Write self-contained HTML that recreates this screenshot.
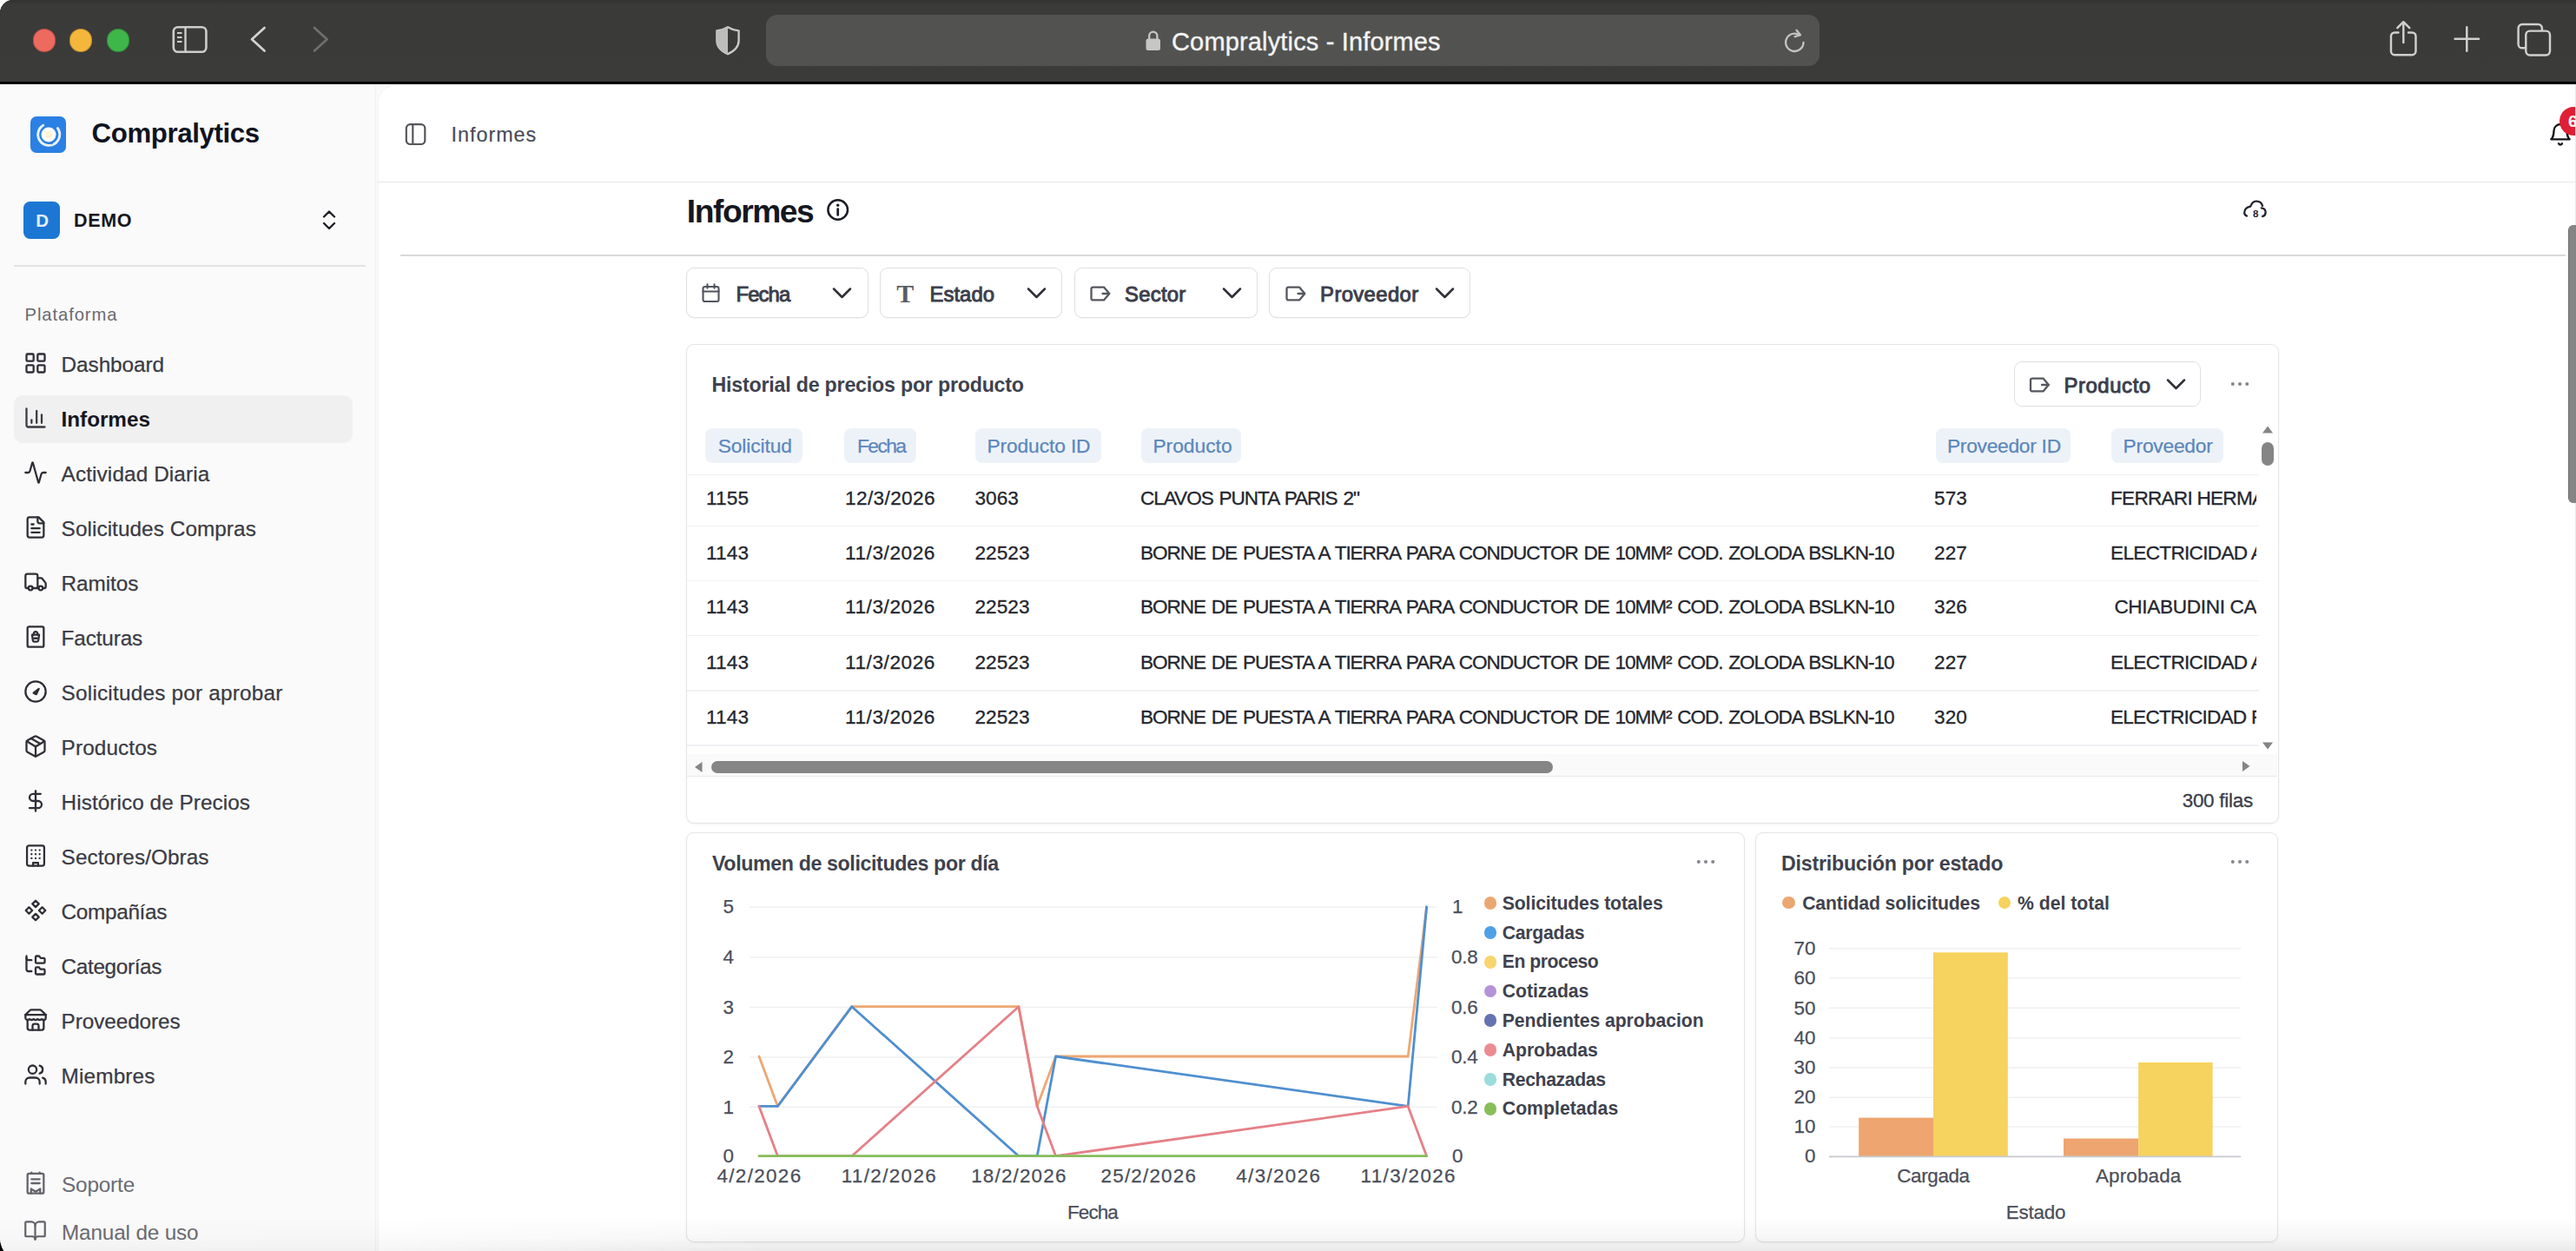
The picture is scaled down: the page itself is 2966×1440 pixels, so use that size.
<!DOCTYPE html>
<html lang="es"><head><meta charset="utf-8"><title>Compralytics - Informes</title>
<style>
html,body{margin:0;padding:0;overflow:hidden}
html{width:2966px;height:1440px}
#root{position:absolute;left:0;top:0;width:2966px;height:1440px;overflow:hidden;background:#fff}
body{width:2966px;height:1440px;position:relative;overflow:hidden;background:#fff;font-family:"Liberation Sans",sans-serif;}
.b{position:absolute;box-sizing:border-box;display:block}
.t{position:absolute;white-space:nowrap;line-height:1;font-family:"Liberation Sans",sans-serif;}
</style></head><body>
<div id="root">
<div class="b" style="left:0.00px;top:1400.00px;width:40.00px;height:40.00px;background:#000;"></div>
<div class="b" style="left:0.00px;top:0.00px;width:2990.00px;height:1452.00px;background:#fafafa;border-radius:15px 0 0 27px;"></div>
<div class="b" style="left:0.00px;top:0.00px;width:2990.00px;height:97.00px;background:#000;border-radius:15px 0 0 0;"></div>
<div class="b" style="left:0.00px;top:0.00px;width:2990.00px;height:94.00px;background:linear-gradient(#333332 0px,#3a3a39 5px,#3b3b3a 100%);border-radius:15px 0 0 0;"></div>
<div class="b" style="left:37.90px;top:33.20px;width:26.60px;height:26.60px;border-radius:50%;background:#ed6a5f;box-shadow:inset 0 0 0 1px rgba(0,0,0,.22);"></div>
<div class="b" style="left:79.80px;top:33.20px;width:26.60px;height:26.60px;border-radius:50%;background:#f5b73b;box-shadow:inset 0 0 0 1px rgba(0,0,0,.22);"></div>
<div class="b" style="left:122.50px;top:33.20px;width:26.60px;height:26.60px;border-radius:50%;background:#3fb649;box-shadow:inset 0 0 0 1px rgba(0,0,0,.22);"></div>
<svg class="b" style="left:196.00px;top:27.00px;" width="46.00" height="38.00" viewBox="0 0 46 38" fill="none"><rect x="3.8" y="4.3" width="37.6" height="28.4" rx="5" stroke="#cdcdcc" stroke-width="2.6"/><path d="M17.5 4.5v28" stroke="#cdcdcc" stroke-width="2.4"/><path d="M8 11h5.5M8 16h5.5M8 21h5.5" stroke="#cdcdcc" stroke-width="2.2"/></svg>
<svg class="b" style="left:285.00px;top:27.00px;" width="26.00" height="38.00" viewBox="0 0 26 38" fill="none"><path d="M19.5 5L5 18.3L19.5 31.6" stroke="#d4d4d3" stroke-width="2.7" stroke-linecap="round" stroke-linejoin="round"/></svg>
<svg class="b" style="left:357.00px;top:27.00px;" width="26.00" height="38.00" viewBox="0 0 26 38" fill="none"><path d="M5 5L19.5 18.3L5 31.6" stroke="#6f6f6e" stroke-width="2.7" stroke-linecap="round" stroke-linejoin="round"/></svg>
<svg class="b" style="left:822.00px;top:28.00px;" width="32.00" height="38.00" viewBox="0 0 32 38" fill="none"><path d="M16 3.2C11.5 6 7 7 3.4 7.4v11.2c0 7.8 5.6 12.6 12.6 15.6 7-3 12.600-7.800 12.600-15.600V7.400C25 7 20.500 6 16 3.200z" stroke="#c9c9c8" stroke-width="2.4" stroke-linejoin="round"/><path d="M16 3.200C11.500 6 7 7 3.400 7.400v11.200c0 7.800 5.600 12.600 12.600 15.600z" fill="#bdbdbc"/></svg>
<div class="b" style="left:882.00px;top:17.00px;width:1213.00px;height:59.00px;background:#525350;border-radius:13px;"></div>
<svg class="b" style="left:1317.00px;top:33.00px;" width="22.00" height="28.00" viewBox="0 0 22 28" fill="none"><rect x="2.500" y="11.500" width="16.500" height="13.500" rx="2.500" fill="#c6c6c5"/><path d="M6.200 12V8.300a4.600 4.600 0 0 1 9.200 0V12" stroke="#c6c6c5" stroke-width="2.300"/></svg>
<div class="t" style="left:1349.00px;top:33.85px;font-size:29.00px;color:#f4f4f4;letter-spacing:0.157px;-webkit-text-stroke:0.35px #f4f4f4;">Compralytics - Informes</div>
<svg class="b" style="left:2051.00px;top:32.00px;" width="32.00" height="32.00" viewBox="0 0 32 32" fill="none"><path d="M25.500 16.800a10.200 10.200 0 1 1-4.400-8.400" stroke="#c4c4c3" stroke-width="2.300" stroke-linecap="round"/><path d="M17.500 2.800l4.500 5.400-6.300 1.900" stroke="#c4c4c3" stroke-width="2.300" stroke-linecap="round" stroke-linejoin="round"/></svg>
<svg class="b" style="left:2747.00px;top:20.00px;" width="42.00" height="48.00" viewBox="0 0 42 48" fill="none"><path d="M14.500 17.400H10.200a4.200 4.200 0 0 0-4.200 4.200V39a4.200 4.200 0 0 0 4.200 4.200h20.100a4.200 4.200 0 0 0 4.200-4.200V21.600a4.200 4.200 0 0 0-4.200-4.200H26" stroke="#d0d0cf" stroke-width="2.450" stroke-linecap="round"/><path d="M20.300 29V5.500M13.300 12.200l7-7 7 7" stroke="#d0d0cf" stroke-width="2.450" stroke-linecap="round" stroke-linejoin="round"/></svg>
<svg class="b" style="left:2824.00px;top:29.00px;" width="32.00" height="32.00" viewBox="0 0 32 32" fill="none"><path d="M16.300 2.300v27.400M2.600 15.800h27.400" stroke="#d0d0cf" stroke-width="2.500" stroke-linecap="round"/></svg>
<svg class="b" style="left:2895.00px;top:24.00px;" width="46.00" height="44.00" viewBox="0 0 46 44" fill="none"><path d="M13.500 31.300h-4.500a4.400 4.400 0 0 1-4.400-4.400V8.400A4.400 4.400 0 0 1 9 4h18.500a4.400 4.400 0 0 1 4.400 4.400v3" stroke="#d0d0cf" stroke-width="2.450"/><rect x="13.300" y="11.600" width="27.700" height="27.800" rx="4.600" stroke="#d0d0cf" stroke-width="2.450"/></svg>
<div class="b" style="left:0.00px;top:99.00px;width:440.00px;height:1353.00px;background:#fafafa;border-radius:0 0 0 27px;"></div>
<div class="b" style="left:34.50px;top:134.00px;width:41.60px;height:42.00px;background:#2b80e3;border-radius:7px;"></div>
<svg class="b" style="left:34.50px;top:134.00px;" width="42.00" height="42.00" viewBox="0 0 42 42" fill="none"><path d="M14.750 10.200A12.500 12.500 0 1 0 31.400 13.600" stroke="#eaf3fd" stroke-width="2.900" stroke-linecap="round"/><circle cx="21" cy="21" r="8.500" fill="#fff"/><circle cx="21" cy="21" r="4.600" fill="#fdf4d6"/><circle cx="24.300" cy="30.800" r="1.500" fill="#2b80e3"/></svg>
<div class="t" style="left:105.60px;top:138.39px;font-size:31.20px;color:#10131f;font-weight:700;letter-spacing:-0.373px;">Compralytics</div>
<div class="b" style="left:27.30px;top:231.50px;width:42.20px;height:43.00px;background:#1c77d4;border-radius:7.500px;"></div>
<div class="t" style="left:41.20px;top:244.25px;font-size:20.50px;color:#e4eefa;font-weight:700;">D</div>
<div class="t" style="left:85.10px;top:243.80px;font-size:21.50px;color:#16161d;font-weight:700;letter-spacing:0.625px;">DEMO</div>
<svg class="b" style="left:366.00px;top:238.00px;" width="26.00" height="30.00" viewBox="0 0 26 30" fill="none"><path d="M7 11.500l6-6 6 6M7 19l6 6 6-6" stroke="#1c1c22" stroke-width="2.300" stroke-linecap="round" stroke-linejoin="round"/></svg>
<div class="b" style="left:15.50px;top:305.00px;width:405.50px;height:1.60px;background:#e3e3e4;"></div>
<div class="t" style="left:28.50px;top:352.20px;font-size:20.20px;color:#6a6a70;letter-spacing:0.932px;">Plataforma</div>
<svg class="b" style="left:26.80px;top:404.00px;" width="28.00" height="28.00" viewBox="0 0 24 24" fill="none"><g stroke="#2e2e36" stroke-width="1.95" stroke-linecap="round" stroke-linejoin="round"><rect width="7" height="7" x="3" y="3" rx="1"/><rect width="7" height="7" x="14" y="3" rx="1"/><rect width="7" height="7" x="14" y="14" rx="1"/><rect width="7" height="7" x="3" y="14" rx="1"/></g></svg>
<div class="t" style="left:70.60px;top:408.13px;font-size:24.30px;color:#3a3a44;letter-spacing:-0.053px;-webkit-text-stroke:0.25px #3a3a44;">Dashboard</div>
<div class="b" style="left:15.50px;top:454.50px;width:390.00px;height:55.00px;background:#f0f0f1;border-radius:10px;"></div>
<svg class="b" style="left:26.80px;top:466.97px;" width="28.00" height="28.00" viewBox="0 0 24 24" fill="none"><g stroke="#3a3a42" stroke-width="1.95" stroke-linecap="round" stroke-linejoin="round"><path d="M3 3v16a2 2 0 0 0 2 2h16"/><path d="M18 17V9"/><path d="M13 17V5"/><path d="M8 17v-3"/></g></svg>
<div class="t" style="left:70.60px;top:471.10px;font-size:24.30px;color:#16161f;font-weight:700;letter-spacing:-0.041px;">Informes</div>
<svg class="b" style="left:26.80px;top:529.94px;" width="28.00" height="28.00" viewBox="0 0 24 24" fill="none"><g stroke="#2e2e36" stroke-width="1.95" stroke-linecap="round" stroke-linejoin="round"><path d="M22 12h-2.480a2 2 0 0 0-1.930 1.460l-2.350 8.360a.25.25 0 0 1-.480 0L9.240 2.180a.25.25 0 0 0-.480 0l-2.350 8.360A2 2 0 0 1 4.490 12H2"/></g></svg>
<div class="t" style="left:70.60px;top:534.07px;font-size:24.30px;color:#3a3a44;letter-spacing:0.123px;-webkit-text-stroke:0.25px #3a3a44;">Actividad Diaria</div>
<svg class="b" style="left:26.80px;top:592.91px;" width="28.00" height="28.00" viewBox="0 0 24 24" fill="none"><g stroke="#2e2e36" stroke-width="1.95" stroke-linecap="round" stroke-linejoin="round"><path d="M15 2H6a2 2 0 0 0-2 2v16a2 2 0 0 0 2 2h12a2 2 0 0 0 2-2V7Z"/><path d="M14 2v4a2 2 0 0 0 2 2h4"/><path d="M10 9H8"/><path d="M16 13H8"/><path d="M16 17H8"/></g></svg>
<div class="t" style="left:70.60px;top:597.04px;font-size:24.30px;color:#3a3a44;letter-spacing:0.076px;-webkit-text-stroke:0.25px #3a3a44;">Solicitudes Compras</div>
<svg class="b" style="left:26.80px;top:655.88px;" width="28.00" height="28.00" viewBox="0 0 24 24" fill="none"><g stroke="#2e2e36" stroke-width="1.95" stroke-linecap="round" stroke-linejoin="round"><path d="M14 18V6a2 2 0 0 0-2-2H4a2 2 0 0 0-2 2v11a1 1 0 0 0 1 1h2"/><path d="M15 18H9"/><path d="M19 18h2a1 1 0 0 0 1-1v-3.650a1 1 0 0 0-.220-.624l-3.480-4.350A1 1 0 0 0 17.520 8H14"/><circle cx="17" cy="18" r="2"/><circle cx="7" cy="18" r="2"/></g></svg>
<div class="t" style="left:70.60px;top:660.01px;font-size:24.30px;color:#3a3a44;letter-spacing:-0.060px;-webkit-text-stroke:0.25px #3a3a44;">Ramitos</div>
<svg class="b" style="left:26.80px;top:718.85px;" width="28.00" height="28.00" viewBox="0 0 24 24" fill="none"><g stroke="#2e2e36" stroke-width="1.95" stroke-linecap="round" stroke-linejoin="round"><rect x="4" y="2" width="16" height="20" rx="1.500"/><path d="M8.500 10h7l-.8 5.500a1.500 1.500 0 0 1-1.500 1.300h-2.400a1.500 1.500 0 0 1-1.500-1.300z"/><path d="M10 10c0-1.800.8-3 2-3s2 1.200 2 3"/><path d="M10.500 13.500h3"/></g></svg>
<div class="t" style="left:70.60px;top:722.98px;font-size:24.30px;color:#3a3a44;letter-spacing:-0.129px;-webkit-text-stroke:0.25px #3a3a44;">Facturas</div>
<svg class="b" style="left:26.80px;top:781.82px;" width="28.00" height="28.00" viewBox="0 0 24 24" fill="none"><g stroke="#2e2e36" stroke-width="1.95" stroke-linecap="round" stroke-linejoin="round"><circle cx="12" cy="12" r="10"/><path d="M10 13.500l5.200-4.200-2.600 5.400z" fill="#333"/></g></svg>
<div class="t" style="left:70.60px;top:785.95px;font-size:24.30px;color:#3a3a44;letter-spacing:0.222px;-webkit-text-stroke:0.25px #3a3a44;">Solicitudes por aprobar</div>
<svg class="b" style="left:26.80px;top:844.79px;" width="28.00" height="28.00" viewBox="0 0 24 24" fill="none"><g stroke="#2e2e36" stroke-width="1.95" stroke-linecap="round" stroke-linejoin="round"><path d="M11 21.730a2 2 0 0 0 2 0l7-4A2 2 0 0 0 21 16V8a2 2 0 0 0-1-1.730l-7-4a2 2 0 0 0-2 0l-7 4A2 2 0 0 0 3 8v8a2 2 0 0 0 1 1.730z"/><path d="M12 22V12"/><path d="m3.300 7 7.703 4.734a2 2 0 0 0 1.994 0L20.700 7"/><path d="m7.500 4.270 9 5.150"/></g></svg>
<div class="t" style="left:70.60px;top:848.92px;font-size:24.30px;color:#3a3a44;letter-spacing:0.121px;-webkit-text-stroke:0.25px #3a3a44;">Productos</div>
<svg class="b" style="left:26.80px;top:907.76px;" width="28.00" height="28.00" viewBox="0 0 24 24" fill="none"><g stroke="#2e2e36" stroke-width="1.95" stroke-linecap="round" stroke-linejoin="round"><line x1="12" x2="12" y1="2" y2="22"/><path d="M17 5H9.500a3.500 3.500 0 0 0 0 7h5a3.500 3.500 0 0 1 0 7H6"/></g></svg>
<div class="t" style="left:70.60px;top:911.89px;font-size:24.30px;color:#3a3a44;letter-spacing:0.071px;-webkit-text-stroke:0.25px #3a3a44;">Histórico de Precios</div>
<svg class="b" style="left:26.80px;top:970.73px;" width="28.00" height="28.00" viewBox="0 0 24 24" fill="none"><g stroke="#2e2e36" stroke-width="1.95" stroke-linecap="round" stroke-linejoin="round"><rect width="17" height="20" x="3.500" y="2" rx="2"/><path d="M9.500 22v-3h5v3"/><path d="M8 6.500h.01M12 6.500h.01M16 6.500h.01M8 10.500h.01M12 10.500h.01M16 10.500h.01M8 14.500h.01M12 14.500h.01M16 14.500h.01"/></g></svg>
<div class="t" style="left:70.60px;top:974.86px;font-size:24.30px;color:#3a3a44;letter-spacing:0.084px;-webkit-text-stroke:0.25px #3a3a44;">Sectores/Obras</div>
<svg class="b" style="left:26.80px;top:1033.70px;" width="28.00" height="28.00" viewBox="0 0 24 24" fill="none"><g stroke="#2e2e36" stroke-width="1.95" stroke-linecap="round" stroke-linejoin="round"><path d="M12 2.300l3.200 3.200L12 8.700 8.800 5.500z"/><path d="M18.500 8.800l3.200 3.200-3.200 3.200-3.200-3.200z"/><path d="M5.500 8.800l3.200 3.200-3.200 3.200L2.300 12z"/><path d="M12 15.300l3.200 3.200-3.200 3.200-3.200-3.200z"/></g></svg>
<div class="t" style="left:70.60px;top:1037.83px;font-size:24.30px;color:#3a3a44;letter-spacing:-0.308px;-webkit-text-stroke:0.25px #3a3a44;">Compañías</div>
<svg class="b" style="left:26.80px;top:1096.67px;" width="28.00" height="28.00" viewBox="0 0 24 24" fill="none"><g stroke="#2e2e36" stroke-width="1.95" stroke-linecap="round" stroke-linejoin="round"><path d="M20 10a1 1 0 0 0 1-1V6a1 1 0 0 0-1-1h-2.500a1 1 0 0 1-.8-.4l-.9-1.200A1 1 0 0 0 15 3h-2a1 1 0 0 0-1 1v5a1 1 0 0 0 1 1Z"/><path d="M20 21a1 1 0 0 0 1-1v-3a1 1 0 0 0-1-1h-2.900a1 1 0 0 1-.880-.550l-.420-.850a1 1 0 0 0-.920-.600H13a1 1 0 0 0-1 1v5a1 1 0 0 0 1 1Z"/><path d="M3 5a2 2 0 0 0 2 2h3"/><path d="M3 3v13a2 2 0 0 0 2 2h3"/></g></svg>
<div class="t" style="left:70.60px;top:1100.80px;font-size:24.30px;color:#3a3a44;letter-spacing:-0.337px;-webkit-text-stroke:0.25px #3a3a44;">Categorías</div>
<svg class="b" style="left:26.80px;top:1159.64px;" width="28.00" height="28.00" viewBox="0 0 24 24" fill="none"><g stroke="#2e2e36" stroke-width="1.95" stroke-linecap="round" stroke-linejoin="round"><path d="m2 7 4.410-4.410A2 2 0 0 1 7.830 2h8.340a2 2 0 0 1 1.420.590L22 7"/><path d="M4 12v8a2 2 0 0 0 2 2h12a2 2 0 0 0 2-2v-8"/><path d="M15 22v-4a2 2 0 0 0-2-2h-2a2 2 0 0 0-2 2v4"/><path d="M2 7h20"/><path d="M22 7v3a2 2 0 0 1-2 2 2.700 2.700 0 0 1-1.590-.630.700.700 0 0 0-.820 0A2.700 2.700 0 0 1 16 12a2.700 2.700 0 0 1-1.590-.630.700.700 0 0 0-.820 0A2.700 2.700 0 0 1 12 12a2.700 2.700 0 0 1-1.590-.630.700.700 0 0 0-.820 0A2.700 2.700 0 0 1 8 12a2.700 2.700 0 0 1-1.590-.630.700.700 0 0 0-.820 0A2.700 2.700 0 0 1 4 12a2 2 0 0 1-2-2V7"/></g></svg>
<div class="t" style="left:70.60px;top:1163.77px;font-size:24.30px;color:#3a3a44;letter-spacing:-0.071px;-webkit-text-stroke:0.25px #3a3a44;">Proveedores</div>
<svg class="b" style="left:26.80px;top:1222.61px;" width="28.00" height="28.00" viewBox="0 0 24 24" fill="none"><g stroke="#2e2e36" stroke-width="1.95" stroke-linecap="round" stroke-linejoin="round"><path d="M16 21v-2a4 4 0 0 0-4-4H6a4 4 0 0 0-4 4v2"/><circle cx="9" cy="7" r="4"/><path d="M22 21v-2a4 4 0 0 0-3-3.870"/><path d="M16 3.130a4 4 0 0 1 0 7.750"/></g></svg>
<div class="t" style="left:70.60px;top:1226.74px;font-size:24.30px;color:#3a3a44;letter-spacing:0.166px;-webkit-text-stroke:0.25px #3a3a44;">Miembres</div>
<svg class="b" style="left:26.80px;top:1348.30px;" width="28.00" height="28.00" viewBox="0 0 24 24" fill="none"><g stroke="#62626a" stroke-width="1.95" stroke-linecap="round" stroke-linejoin="round"><rect x="4" y="2.500" width="16" height="19.500" rx="1.500"/><path d="M8 2.500v-1M16 2.500v-1"/><path d="M8 8h8M8 12h8"/><path d="M7.500 22v-4.500l4.500 2.800 4.500-2.800V22"/></g></svg>
<div class="t" style="left:71.00px;top:1351.63px;font-size:24.30px;color:#6b6b72;letter-spacing:-0.159px;">Soporte</div>
<svg class="b" style="left:27.30px;top:1403.30px;" width="27.00" height="27.00" viewBox="0 0 24 24" fill="none"><g stroke="#62626a" stroke-width="1.95" stroke-linecap="round" stroke-linejoin="round"><path d="M12 7v14"/><path d="M3 18a1 1 0 0 1-1-1V4a1 1 0 0 1 1-1h5a4 4 0 0 1 4 4 4 4 0 0 1 4-4h5a1 1 0 0 1 1 1v13a1 1 0 0 1-1 1h-6a3 3 0 0 0-3 3 3 3 0 0 0-3-3z"/></g></svg>
<div class="t" style="left:71.00px;top:1406.73px;font-size:24.30px;color:#6b6b72;letter-spacing:-0.147px;">Manual de uso</div>
<div class="b" style="left:0.00px;top:97.00px;width:2966.00px;height:2.20px;background:#fff;"></div>
<div class="b" style="left:432.30px;top:99.00px;width:1.20px;height:1345.00px;background:#f0f0f1;"></div>
<div class="b" style="left:436.30px;top:99.00px;width:2560.00px;height:1400.00px;background:#fff;border-radius:19px 0 0 0;box-shadow:0 0 3px rgba(0,0,0,.06);"></div>
<svg class="b" style="left:465.00px;top:141.00px;" width="28.00" height="28.00" viewBox="0 0 28 28" fill="none"><rect x="2.800" y="2.200" width="21.500" height="22.800" rx="4.500" stroke="#55565c" stroke-width="2.200"/><path d="M10.300 2.500v22.500" stroke="#55565c" stroke-width="2.200"/></svg>
<div class="t" style="left:519.50px;top:144.09px;font-size:23.40px;color:#4a4c58;letter-spacing:0.971px;-webkit-text-stroke:0.20px #4a4c58;">Informes</div>
<svg class="b" style="left:2934.00px;top:140.00px;" width="28.00" height="30.00" viewBox="0 0 28 30" fill="none"><g stroke="#15151c" stroke-width="2.300" stroke-linecap="round" stroke-linejoin="round"><path d="M6.500 10.500a7.500 7.500 0 0 1 15 0c0 7.500 3.200 9.800 3.200 9.800H3.300s3.200-2.300 3.200-9.800"/><path d="M12 25.200a2.200 2.200 0 0 0 4 0"/></g></svg>
<div class="b" style="left:2946.50px;top:123.00px;width:33.00px;height:33.00px;background:#df1f33;border-radius:50%;"></div>
<div class="t" style="left:2957.00px;top:130.42px;font-size:19.00px;color:#fff;font-weight:700;">6</div>
<div class="b" style="left:434.00px;top:208.50px;width:2531.00px;height:1.80px;background:#e6e6e7;"></div>
<div class="t" style="left:790.80px;top:225.41px;font-size:37.20px;color:#15171f;font-weight:700;letter-spacing:-1.451px;">Informes</div>
<svg class="b" style="left:950.00px;top:227.00px;" width="30.00" height="30.00" viewBox="0 0 30 30" fill="none"><circle cx="14.700" cy="14.500" r="11.300" stroke="#1a1c26" stroke-width="2.500"/><path d="M14.700 13.500v7" stroke="#1a1c26" stroke-width="2.700" stroke-linecap="round"/><circle cx="14.700" cy="9.200" r="1.700" fill="#1a1c26"/></svg>
<svg class="b" style="left:2580.50px;top:226.30px;" width="32.00" height="28.00" viewBox="0 0 32 28" fill="none"><g stroke="#22242c" stroke-width="2.300" stroke-linecap="round" stroke-linejoin="round"><path d="M5.900 22.600C3.900 21.800 3 20.200 3.200 18.400C3.400 15.400 5.800 12.600 10.200 11.700C11.400 8 14 5.600 17 5.600C20.400 5.600 23.200 7.800 24 10.900"/><path d="M22.800 13.300C25.800 13.600 27.700 15.800 27.600 18.600C27.500 21 26 22.600 24.100 23"/></g><text x="16.100" y="23.800" font-family="Liberation Sans" font-weight="700" font-size="11.500" text-anchor="middle" fill="#22242c">8</text></svg>
<div class="b" style="left:461.00px;top:293.30px;width:2493.00px;height:1.70px;background:#d8d9db;"></div>
<div class="b" style="left:2964.60px;top:97.00px;width:1.40px;height:1343.00px;background:#ebebec;"></div>
<div class="b" style="left:2957.30px;top:258.50px;width:12.00px;height:320.00px;background:#858585;border-radius:6px 0 0 6px;border-left:1.500px solid #707070;"></div>
<div class="b" style="left:789.50px;top:308.00px;width:210.00px;height:57.50px;border:1.500px solid #dedfe2;border-radius:9px;background:#fff;box-shadow:0 1px 1px rgba(0,0,0,.03);"></div>
<svg class="b" style="left:806.50px;top:325.20px;" width="24.00" height="25.00" viewBox="0 0 24 25" fill="none"><g stroke="#51535c" stroke-width="2.100" stroke-linecap="round" stroke-linejoin="round"><rect x="2.500" y="5" width="18" height="17" rx="2"/><path d="M2.500 10.500h18M7.500 2.200v4.500M15.500 2.200v4.500"/></g></svg>
<div class="t" style="left:847.60px;top:327.07px;font-size:23.90px;color:#3b3e4a;letter-spacing:-0.945px;-webkit-text-stroke:0.95px #3b3e4a;">Fecha</div>
<svg class="b" style="left:957.20px;top:327.50px;" width="25.00" height="19.00" viewBox="0 0 25 19" fill="none"><path d="M3 4.500l9.500 9.500L22 4.500" stroke="#2f3038" stroke-width="2.500" stroke-linecap="round" stroke-linejoin="round"/></svg>
<div class="b" style="left:1012.50px;top:308.00px;width:210.00px;height:57.50px;border:1.500px solid #dedfe2;border-radius:9px;background:#fff;box-shadow:0 1px 1px rgba(0,0,0,.03);"></div>
<div class="t" style="left:1032.30px;top:323.21px;font-size:30.00px;color:#5a5c64;font-weight:700;font-family:'Liberation Serif',serif;">T</div>
<div class="t" style="left:1070.60px;top:327.07px;font-size:23.90px;color:#3b3e4a;-webkit-text-stroke:0.95px #3b3e4a;">Estado</div>
<svg class="b" style="left:1181.00px;top:327.50px;" width="25.00" height="19.00" viewBox="0 0 25 19" fill="none"><path d="M3 4.500l9.500 9.500L22 4.500" stroke="#2f3038" stroke-width="2.500" stroke-linecap="round" stroke-linejoin="round"/></svg>
<div class="b" style="left:1236.50px;top:308.00px;width:211.00px;height:57.50px;border:1.500px solid #dedfe2;border-radius:9px;background:#fff;box-shadow:0 1px 1px rgba(0,0,0,.03);"></div>
<svg class="b" style="left:1254.00px;top:326.50px;" width="26.00" height="22.00" viewBox="0 0 26 22" fill="none"><g stroke="#55575e" stroke-width="2.300" stroke-linecap="round" stroke-linejoin="round"><path d="M2.500 5.600a2 2 0 0 1 2-2h12.500l6.300 7.400-6.300 7.400H4.500a2 2 0 0 1-2-2z"/><path d="M15.500 11h7.500"/></g></svg>
<div class="t" style="left:1295.10px;top:327.07px;font-size:23.90px;color:#3b3e4a;letter-spacing:0.221px;-webkit-text-stroke:0.95px #3b3e4a;">Sector</div>
<svg class="b" style="left:1405.50px;top:327.50px;" width="25.00" height="19.00" viewBox="0 0 25 19" fill="none"><path d="M3 4.500l9.500 9.500L22 4.500" stroke="#2f3038" stroke-width="2.500" stroke-linecap="round" stroke-linejoin="round"/></svg>
<div class="b" style="left:1461.00px;top:308.00px;width:232.00px;height:57.50px;border:1.500px solid #dedfe2;border-radius:9px;background:#fff;box-shadow:0 1px 1px rgba(0,0,0,.03);"></div>
<svg class="b" style="left:1478.50px;top:326.50px;" width="26.00" height="22.00" viewBox="0 0 26 22" fill="none"><g stroke="#55575e" stroke-width="2.300" stroke-linecap="round" stroke-linejoin="round"><path d="M2.500 5.600a2 2 0 0 1 2-2h12.500l6.300 7.400-6.300 7.400H4.500a2 2 0 0 1-2-2z"/><path d="M15.500 11h7.500"/></g></svg>
<div class="t" style="left:1520.10px;top:327.07px;font-size:23.90px;color:#3b3e4a;letter-spacing:0.348px;-webkit-text-stroke:0.95px #3b3e4a;">Proveedor</div>
<svg class="b" style="left:1651.00px;top:327.50px;" width="25.00" height="19.00" viewBox="0 0 25 19" fill="none"><path d="M3 4.500l9.500 9.500L22 4.500" stroke="#2f3038" stroke-width="2.500" stroke-linecap="round" stroke-linejoin="round"/></svg>
<div class="b" style="left:789.50px;top:395.50px;width:1834.00px;height:552.80px;border:1.700px solid #e4e5e7;border-radius:9px;background:#fff;box-shadow:0 1px 3px rgba(0,0,0,.05);"></div>
<div class="t" style="left:819.50px;top:432.26px;font-size:23.20px;color:#3e424e;font-weight:700;letter-spacing:-0.200px;">Historial de precios por producto</div>
<div class="b" style="left:2318.50px;top:415.50px;width:215.50px;height:52.50px;border:1.500px solid #dedfe2;border-radius:9px;background:#fff;"></div>
<svg class="b" style="left:2334.60px;top:431.60px;" width="27.00" height="22.00" viewBox="0 0 26 22" fill="none"><g stroke="#55575e" stroke-width="2.300" stroke-linecap="round" stroke-linejoin="round"><path d="M2.500 5.600a2 2 0 0 1 2-2h12.500l6.300 7.400-6.300 7.400H4.500a2 2 0 0 1-2-2z"/><path d="M15.500 11h7.500"/></g></svg>
<div class="t" style="left:2376.40px;top:432.07px;font-size:23.90px;color:#3b3e4a;letter-spacing:0.592px;-webkit-text-stroke:0.95px #3b3e4a;">Producto</div>
<svg class="b" style="left:2493.00px;top:433.20px;" width="25.00" height="19.00" viewBox="0 0 25 19" fill="none"><path d="M3 4.500l9.500 9.500L22 4.500" stroke="#2f3038" stroke-width="2.500" stroke-linecap="round" stroke-linejoin="round"/></svg>
<svg class="b" style="left:2565.00px;top:438.00px;" width="28.00" height="8.00" viewBox="0 0 28 8" fill="none"><circle cx="5.800" cy="4" r="2.050" fill="#86888f"/><circle cx="14" cy="4" r="2.050" fill="#86888f"/><circle cx="22.200" cy="4" r="2.050" fill="#86888f"/></svg>
<div class="b" style="left:812.40px;top:492.80px;width:111.80px;height:40.00px;background:#edf2f9;border-radius:8px;"></div>
<div class="t" style="left:826.70px;top:502.00px;font-size:22.80px;color:#5b87bb;letter-spacing:-0.120px;-webkit-text-stroke:0.25px #5b87bb;">Solicitud</div>
<div class="b" style="left:971.60px;top:492.80px;width:83.80px;height:40.00px;background:#edf2f9;border-radius:8px;"></div>
<div class="t" style="left:987.10px;top:502.00px;font-size:22.80px;color:#5b87bb;letter-spacing:-1.654px;-webkit-text-stroke:0.25px #5b87bb;">Fecha</div>
<div class="b" style="left:1122.80px;top:492.80px;width:145.20px;height:40.00px;background:#edf2f9;border-radius:8px;"></div>
<div class="t" style="left:1136.40px;top:502.00px;font-size:22.80px;color:#5b87bb;letter-spacing:-0.118px;-webkit-text-stroke:0.25px #5b87bb;">Producto ID</div>
<div class="b" style="left:1313.80px;top:492.80px;width:115.70px;height:40.00px;background:#edf2f9;border-radius:8px;"></div>
<div class="t" style="left:1327.40px;top:502.00px;font-size:22.80px;color:#5b87bb;letter-spacing:-0.007px;-webkit-text-stroke:0.25px #5b87bb;">Producto</div>
<div class="b" style="left:2228.60px;top:492.80px;width:155.90px;height:40.00px;background:#edf2f9;border-radius:8px;"></div>
<div class="t" style="left:2241.90px;top:502.00px;font-size:22.80px;color:#5b87bb;letter-spacing:-0.278px;-webkit-text-stroke:0.25px #5b87bb;">Proveedor ID</div>
<div class="b" style="left:2430.60px;top:492.80px;width:129.30px;height:40.00px;background:#edf2f9;border-radius:8px;"></div>
<div class="t" style="left:2444.60px;top:502.00px;font-size:22.80px;color:#5b87bb;letter-spacing:-0.244px;-webkit-text-stroke:0.25px #5b87bb;">Proveedor</div>
<div class="b" style="left:791.00px;top:545.80px;width:1810.00px;height:1.50px;background:#f0f1f3;"></div>
<div class="b" style="left:791.00px;top:604.60px;width:1810.00px;height:1.50px;background:#f0f1f3;"></div>
<div class="b" style="left:791.00px;top:667.50px;width:1810.00px;height:1.50px;background:#f0f1f3;"></div>
<div class="b" style="left:791.00px;top:730.80px;width:1810.00px;height:1.50px;background:#f0f1f3;"></div>
<div class="b" style="left:791.00px;top:794.00px;width:1810.00px;height:1.50px;background:#f0f1f3;"></div>
<div class="b" style="left:791.00px;top:857.00px;width:1810.00px;height:1.50px;background:#f0f1f3;"></div>
<div class="b" style="left:791px;top:540px;width:1806.5px;height:330px;overflow:hidden;">
<div class="t" style="left:22.00px;top:23.37px;font-size:22.60px;color:#23262e;letter-spacing:0.200px;-webkit-text-stroke:0.30px #23262e;">1155</div>
<div class="t" style="left:182.00px;top:23.37px;font-size:22.60px;color:#23262e;letter-spacing:0.384px;-webkit-text-stroke:0.30px #23262e;">12/3/2026</div>
<div class="t" style="left:331.40px;top:23.37px;font-size:22.60px;color:#23262e;letter-spacing:0.056px;-webkit-text-stroke:0.30px #23262e;">3063</div>
<div class="t" style="left:522.00px;top:23.37px;font-size:22.60px;color:#23262e;letter-spacing:-1.051px;word-spacing:1.60px;-webkit-text-stroke:0.30px #23262e;">CLAVOS PUNTA PARIS 2"</div>
<div class="t" style="left:1436.00px;top:23.37px;font-size:22.60px;color:#23262e;letter-spacing:0.097px;-webkit-text-stroke:0.30px #23262e;">573</div>
<div class="t" style="left:1639.00px;top:23.37px;font-size:22.60px;color:#23262e;letter-spacing:-0.747px;-webkit-text-stroke:0.30px #23262e;">FERRARI HERMANOS S.A.</div>
<div class="t" style="left:22.00px;top:86.07px;font-size:22.60px;color:#23262e;letter-spacing:0.200px;-webkit-text-stroke:0.30px #23262e;">1143</div>
<div class="t" style="left:182.00px;top:86.07px;font-size:22.60px;color:#23262e;letter-spacing:0.570px;-webkit-text-stroke:0.30px #23262e;">11/3/2026</div>
<div class="t" style="left:331.40px;top:86.07px;font-size:22.60px;color:#23262e;letter-spacing:0.091px;-webkit-text-stroke:0.30px #23262e;">22523</div>
<div class="t" style="left:522.00px;top:86.07px;font-size:22.60px;color:#23262e;letter-spacing:-1.068px;word-spacing:1.60px;-webkit-text-stroke:0.30px #23262e;">BORNE DE PUESTA A TIERRA PARA CONDUCTOR DE 10MM² COD. ZOLODA BSLKN-10</div>
<div class="t" style="left:1436.00px;top:86.07px;font-size:22.60px;color:#23262e;letter-spacing:0.097px;-webkit-text-stroke:0.30px #23262e;">227</div>
<div class="t" style="left:1639.00px;top:86.07px;font-size:22.60px;color:#23262e;letter-spacing:-0.685px;-webkit-text-stroke:0.30px #23262e;">ELECTRICIDAD ALSINA S.A.</div>
<div class="t" style="left:22.00px;top:148.27px;font-size:22.60px;color:#23262e;letter-spacing:0.200px;-webkit-text-stroke:0.30px #23262e;">1143</div>
<div class="t" style="left:182.00px;top:148.27px;font-size:22.60px;color:#23262e;letter-spacing:0.570px;-webkit-text-stroke:0.30px #23262e;">11/3/2026</div>
<div class="t" style="left:331.40px;top:148.27px;font-size:22.60px;color:#23262e;letter-spacing:0.091px;-webkit-text-stroke:0.30px #23262e;">22523</div>
<div class="t" style="left:522.00px;top:148.27px;font-size:22.60px;color:#23262e;letter-spacing:-1.068px;word-spacing:1.60px;-webkit-text-stroke:0.30px #23262e;">BORNE DE PUESTA A TIERRA PARA CONDUCTOR DE 10MM² COD. ZOLODA BSLKN-10</div>
<div class="t" style="left:1436.00px;top:148.27px;font-size:22.60px;color:#23262e;letter-spacing:0.097px;-webkit-text-stroke:0.30px #23262e;">326</div>
<div class="t" style="left:1643.40px;top:148.27px;font-size:22.60px;color:#23262e;letter-spacing:-0.338px;-webkit-text-stroke:0.30px #23262e;">CHIABUDINI CARLOS</div>
<div class="t" style="left:22.00px;top:212.07px;font-size:22.60px;color:#23262e;letter-spacing:0.200px;-webkit-text-stroke:0.30px #23262e;">1143</div>
<div class="t" style="left:182.00px;top:212.07px;font-size:22.60px;color:#23262e;letter-spacing:0.570px;-webkit-text-stroke:0.30px #23262e;">11/3/2026</div>
<div class="t" style="left:331.40px;top:212.07px;font-size:22.60px;color:#23262e;letter-spacing:0.091px;-webkit-text-stroke:0.30px #23262e;">22523</div>
<div class="t" style="left:522.00px;top:212.07px;font-size:22.60px;color:#23262e;letter-spacing:-1.068px;word-spacing:1.60px;-webkit-text-stroke:0.30px #23262e;">BORNE DE PUESTA A TIERRA PARA CONDUCTOR DE 10MM² COD. ZOLODA BSLKN-10</div>
<div class="t" style="left:1436.00px;top:212.07px;font-size:22.60px;color:#23262e;letter-spacing:0.097px;-webkit-text-stroke:0.30px #23262e;">227</div>
<div class="t" style="left:1639.00px;top:212.07px;font-size:22.60px;color:#23262e;letter-spacing:-0.685px;-webkit-text-stroke:0.30px #23262e;">ELECTRICIDAD ALSINA S.A.</div>
<div class="t" style="left:22.00px;top:275.07px;font-size:22.60px;color:#23262e;letter-spacing:0.200px;-webkit-text-stroke:0.30px #23262e;">1143</div>
<div class="t" style="left:182.00px;top:275.07px;font-size:22.60px;color:#23262e;letter-spacing:0.570px;-webkit-text-stroke:0.30px #23262e;">11/3/2026</div>
<div class="t" style="left:331.40px;top:275.07px;font-size:22.60px;color:#23262e;letter-spacing:0.091px;-webkit-text-stroke:0.30px #23262e;">22523</div>
<div class="t" style="left:522.00px;top:275.07px;font-size:22.60px;color:#23262e;letter-spacing:-1.068px;word-spacing:1.60px;-webkit-text-stroke:0.30px #23262e;">BORNE DE PUESTA A TIERRA PARA CONDUCTOR DE 10MM² COD. ZOLODA BSLKN-10</div>
<div class="t" style="left:1436.00px;top:275.07px;font-size:22.60px;color:#23262e;letter-spacing:0.097px;-webkit-text-stroke:0.30px #23262e;">320</div>
<div class="t" style="left:1639.00px;top:275.07px;font-size:22.60px;color:#23262e;letter-spacing:-0.775px;-webkit-text-stroke:0.30px #23262e;">ELECTRICIDAD FERNANDEZ</div>
</div>
<svg class="b" style="left:2603.00px;top:488.00px;" width="16.00" height="12.00" viewBox="0 0 16 12" fill="none"><path d="M8 2.500L14 10.500H2z" fill="#858585"/></svg>
<div class="b" style="left:2604.00px;top:509.00px;width:14.00px;height:27.00px;background:#858585;border-radius:7px;"></div>
<svg class="b" style="left:2603.00px;top:851.50px;" width="16.00" height="12.00" viewBox="0 0 16 12" fill="none"><path d="M8 10.500L14 2.500H2z" fill="#858585"/></svg>
<div class="b" style="left:791.00px;top:868.00px;width:1831.00px;height:25.00px;background:#fafafa;"></div>
<svg class="b" style="left:798.00px;top:875.00px;" width="12.00" height="16.00" viewBox="0 0 12 16" fill="none"><path d="M2 8L10.500 2v12z" fill="#858585"/></svg>
<div class="b" style="left:818.50px;top:875.50px;width:969.00px;height:14.00px;background:#858585;border-radius:7px;"></div>
<svg class="b" style="left:2579.50px;top:874.00px;" width="12.00" height="16.00" viewBox="0 0 12 16" fill="none"><path d="M10.500 8L2 2v12z" fill="#858585"/></svg>
<div class="b" style="left:791.00px;top:892.50px;width:1831.00px;height:1.50px;background:#e9eaec;"></div>
<div class="t" style="left:2512.70px;top:910.64px;font-size:22.40px;color:#3a3d48;letter-spacing:-0.237px;-webkit-text-stroke:0.30px #3a3d48;">300 filas</div>
<div class="b" style="left:789.50px;top:958.30px;width:1219.50px;height:472.20px;border:1.700px solid #e4e5e7;border-radius:9px;background:#fff;box-shadow:0 1px 3px rgba(0,0,0,.05);"></div>
<div class="t" style="left:820.00px;top:982.96px;font-size:23.20px;color:#3e424e;font-weight:700;letter-spacing:-0.373px;">Volumen de solicitudes por día</div>
<svg class="b" style="left:1950.00px;top:988.30px;" width="28.00" height="8.00" viewBox="0 0 28 8" fill="none"><circle cx="5.800" cy="4" r="2.050" fill="#86888f"/><circle cx="14" cy="4" r="2.050" fill="#86888f"/><circle cx="22.200" cy="4" r="2.050" fill="#86888f"/></svg>
<svg class="b" style="left:0;top:0" width="2966" height="1440" viewBox="0 0 2966 1440" fill="none"><path d="M863 1044.0H1654.500" stroke="#eeeff1" stroke-width="1.500"/><path d="M863 1102.0H1654.500" stroke="#eeeff1" stroke-width="1.500"/><path d="M863 1159.6H1654.500" stroke="#eeeff1" stroke-width="1.500"/><path d="M863 1217.0H1654.500" stroke="#eeeff1" stroke-width="1.500"/><path d="M863 1274.3H1654.500" stroke="#eeeff1" stroke-width="1.500"/><polyline points="874.0,1216.0 895.4,1273.4 980.8,1158.7 1172.9,1158.7 1194.2,1273.4 1215.6,1216.0 1621.2,1216.0 1642.6,1044.0" stroke="#eea772" stroke-width="2.800" stroke-linejoin="round" stroke-linecap="round" fill="none"/><polyline points="874.0,1273.4 895.4,1273.4 980.8,1158.7 1172.9,1330.7 1194.2,1330.7 1215.6,1216.0 1621.2,1273.4 1642.6,1044.0" stroke="#4f8fd0" stroke-width="2.800" stroke-linejoin="round" stroke-linecap="round" fill="none"/><polyline points="874.0,1273.4 895.4,1330.7 980.8,1330.7 1172.9,1158.7 1194.2,1273.4 1215.6,1330.7 1621.2,1273.4 1642.6,1330.7" stroke="#e58088" stroke-width="2.800" stroke-linejoin="round" stroke-linecap="round" fill="none"/><polyline points="874.0,1330.7 895.4,1330.7 980.8,1330.7 1172.9,1330.7 1194.2,1330.7 1215.6,1330.7 1621.2,1330.7 1642.6,1330.7" stroke="#86bd5a" stroke-width="2.800" stroke-linejoin="round" stroke-linecap="round" fill="none"/></svg>
<div class="t" style="left:832.57px;top:1033.24px;font-size:22.40px;color:#4a4e5a;-webkit-text-stroke:0.25px #4a4e5a;">5</div>
<div class="t" style="left:832.57px;top:1091.24px;font-size:22.40px;color:#4a4e5a;-webkit-text-stroke:0.25px #4a4e5a;">4</div>
<div class="t" style="left:832.57px;top:1148.84px;font-size:22.40px;color:#4a4e5a;-webkit-text-stroke:0.25px #4a4e5a;">3</div>
<div class="t" style="left:832.57px;top:1206.24px;font-size:22.40px;color:#4a4e5a;-webkit-text-stroke:0.25px #4a4e5a;">2</div>
<div class="t" style="left:832.57px;top:1263.54px;font-size:22.40px;color:#4a4e5a;-webkit-text-stroke:0.25px #4a4e5a;">1</div>
<div class="t" style="left:832.57px;top:1319.94px;font-size:22.40px;color:#4a4e5a;-webkit-text-stroke:0.25px #4a4e5a;">0</div>
<div class="t" style="left:1672.00px;top:1033.44px;font-size:22.40px;color:#4a4e5a;-webkit-text-stroke:0.25px #4a4e5a;">1</div>
<div class="t" style="left:1671.00px;top:1091.44px;font-size:22.40px;color:#4a4e5a;letter-spacing:-0.213px;-webkit-text-stroke:0.25px #4a4e5a;">0.8</div>
<div class="t" style="left:1671.00px;top:1149.04px;font-size:22.40px;color:#4a4e5a;letter-spacing:-0.213px;-webkit-text-stroke:0.25px #4a4e5a;">0.6</div>
<div class="t" style="left:1671.00px;top:1206.44px;font-size:22.40px;color:#4a4e5a;letter-spacing:-0.213px;-webkit-text-stroke:0.25px #4a4e5a;">0.4</div>
<div class="t" style="left:1671.00px;top:1263.74px;font-size:22.40px;color:#4a4e5a;letter-spacing:-0.213px;-webkit-text-stroke:0.25px #4a4e5a;">0.2</div>
<div class="t" style="left:1672.00px;top:1320.14px;font-size:22.40px;color:#4a4e5a;-webkit-text-stroke:0.25px #4a4e5a;">0</div>
<div class="t" style="left:825.50px;top:1342.54px;font-size:22.40px;color:#4a4e5a;letter-spacing:1.350px;-webkit-text-stroke:0.25px #4a4e5a;">4/2/2026</div>
<div class="t" style="left:968.70px;top:1342.54px;font-size:22.40px;color:#4a4e5a;letter-spacing:1.390px;-webkit-text-stroke:0.25px #4a4e5a;">11/2/2026</div>
<div class="t" style="left:1118.15px;top:1342.54px;font-size:22.40px;color:#4a4e5a;letter-spacing:1.205px;-webkit-text-stroke:0.25px #4a4e5a;">18/2/2026</div>
<div class="t" style="left:1267.60px;top:1342.54px;font-size:22.40px;color:#4a4e5a;letter-spacing:1.205px;-webkit-text-stroke:0.25px #4a4e5a;">25/2/2026</div>
<div class="t" style="left:1423.30px;top:1342.54px;font-size:22.40px;color:#4a4e5a;letter-spacing:1.350px;-webkit-text-stroke:0.25px #4a4e5a;">4/3/2026</div>
<div class="t" style="left:1566.50px;top:1342.54px;font-size:22.40px;color:#4a4e5a;letter-spacing:1.390px;-webkit-text-stroke:0.25px #4a4e5a;">11/3/2026</div>
<div class="t" style="left:1229.00px;top:1385.04px;font-size:22.40px;color:#4a4e5a;letter-spacing:-0.852px;-webkit-text-stroke:0.25px #4a4e5a;">Fecha</div>
<div class="b" style="left:1708.60px;top:1032.20px;width:14.80px;height:14.80px;border-radius:50%;background:#eba772;"></div>
<div class="t" style="left:1729.80px;top:1028.75px;font-size:21.20px;color:#3e424e;font-weight:700;letter-spacing:-0.127px;">Solicitudes totales</div>
<div class="b" style="left:1708.60px;top:1066.00px;width:14.80px;height:14.80px;border-radius:50%;background:#4fa1e6;"></div>
<div class="t" style="left:1729.80px;top:1062.55px;font-size:21.20px;color:#3e424e;font-weight:700;letter-spacing:-0.266px;">Cargadas</div>
<div class="b" style="left:1708.60px;top:1099.80px;width:14.80px;height:14.80px;border-radius:50%;background:#f6d56e;"></div>
<div class="t" style="left:1729.80px;top:1096.35px;font-size:21.20px;color:#3e424e;font-weight:700;letter-spacing:-0.495px;">En proceso</div>
<div class="b" style="left:1708.60px;top:1133.60px;width:14.80px;height:14.80px;border-radius:50%;background:#b493d6;"></div>
<div class="t" style="left:1729.80px;top:1130.15px;font-size:21.20px;color:#3e424e;font-weight:700;letter-spacing:-0.070px;">Cotizadas</div>
<div class="b" style="left:1708.60px;top:1167.40px;width:14.80px;height:14.80px;border-radius:50%;background:#6672b0;"></div>
<div class="t" style="left:1729.80px;top:1163.95px;font-size:21.20px;color:#3e424e;font-weight:700;letter-spacing:-0.065px;">Pendientes aprobacion</div>
<div class="b" style="left:1708.60px;top:1201.20px;width:14.80px;height:14.80px;border-radius:50%;background:#ec8b92;"></div>
<div class="t" style="left:1729.80px;top:1197.75px;font-size:21.20px;color:#3e424e;font-weight:700;letter-spacing:-0.082px;">Aprobadas</div>
<div class="b" style="left:1708.60px;top:1235.00px;width:14.80px;height:14.80px;border-radius:50%;background:#9bdcdc;"></div>
<div class="t" style="left:1729.80px;top:1231.55px;font-size:21.20px;color:#3e424e;font-weight:700;letter-spacing:-0.356px;">Rechazadas</div>
<div class="b" style="left:1708.60px;top:1268.80px;width:14.80px;height:14.80px;border-radius:50%;background:#88be5a;"></div>
<div class="t" style="left:1729.80px;top:1265.35px;font-size:21.20px;color:#3e424e;font-weight:700;letter-spacing:0.034px;">Completadas</div>
<div class="b" style="left:2020.50px;top:958.30px;width:602.50px;height:472.20px;border:1.700px solid #e4e5e7;border-radius:9px;background:#fff;box-shadow:0 1px 3px rgba(0,0,0,.05);"></div>
<div class="t" style="left:2051.00px;top:982.96px;font-size:23.20px;color:#3e424e;font-weight:700;letter-spacing:-0.221px;">Distribución por estado</div>
<svg class="b" style="left:2565.00px;top:988.30px;" width="28.00" height="8.00" viewBox="0 0 28 8" fill="none"><circle cx="5.800" cy="4" r="2.050" fill="#86888f"/><circle cx="14" cy="4" r="2.050" fill="#86888f"/><circle cx="22.200" cy="4" r="2.050" fill="#86888f"/></svg>
<div class="b" style="left:2052.30px;top:1032.10px;width:14.40px;height:14.40px;border-radius:50%;background:#eba772;"></div>
<div class="t" style="left:2075.20px;top:1028.95px;font-size:21.20px;color:#3e424e;font-weight:700;letter-spacing:-0.126px;">Cantidad solicitudes</div>
<div class="b" style="left:2301.10px;top:1032.10px;width:14.40px;height:14.40px;border-radius:50%;background:#f6d25e;"></div>
<div class="t" style="left:2323.00px;top:1028.95px;font-size:21.20px;color:#3e424e;font-weight:700;">% del total</div>
<svg class="b" style="left:0;top:0" width="2966" height="1440" viewBox="0 0 2966 1440" fill="none"><path d="M2106 1091.8H2580" stroke="#eeeff1" stroke-width="1.500"/><path d="M2106 1125.8H2580" stroke="#eeeff1" stroke-width="1.500"/><path d="M2106 1160.3H2580" stroke="#eeeff1" stroke-width="1.500"/><path d="M2106 1194.8H2580" stroke="#eeeff1" stroke-width="1.500"/><path d="M2106 1228.9H2580" stroke="#eeeff1" stroke-width="1.500"/><path d="M2106 1263.2H2580" stroke="#eeeff1" stroke-width="1.500"/><path d="M2106 1297.0H2580" stroke="#eeeff1" stroke-width="1.500"/><rect x="2140.2" y="1286.6" width="85.8" height="44.4" fill="#eea56f"/><rect x="2226.0" y="1096.3" width="85.8" height="234.7" fill="#f6d25e"/><rect x="2376.0" y="1310.5" width="86.2" height="20.5" fill="#eea56f"/><rect x="2462.2" y="1223.0" width="85.4" height="108.0" fill="#f6d25e"/><path d="M2106 1331.300H2580" stroke="#c8cad0" stroke-width="1.800"/></svg>
<div class="t" style="left:2065.58px;top:1081.04px;font-size:22.40px;color:#4a4e5a;-webkit-text-stroke:0.25px #4a4e5a;">70</div>
<div class="t" style="left:2065.58px;top:1115.04px;font-size:22.40px;color:#4a4e5a;-webkit-text-stroke:0.25px #4a4e5a;">60</div>
<div class="t" style="left:2065.58px;top:1149.54px;font-size:22.40px;color:#4a4e5a;-webkit-text-stroke:0.25px #4a4e5a;">50</div>
<div class="t" style="left:2065.58px;top:1184.04px;font-size:22.40px;color:#4a4e5a;-webkit-text-stroke:0.25px #4a4e5a;">40</div>
<div class="t" style="left:2065.58px;top:1218.14px;font-size:22.40px;color:#4a4e5a;-webkit-text-stroke:0.25px #4a4e5a;">30</div>
<div class="t" style="left:2065.58px;top:1252.44px;font-size:22.40px;color:#4a4e5a;-webkit-text-stroke:0.25px #4a4e5a;">20</div>
<div class="t" style="left:2065.58px;top:1286.24px;font-size:22.40px;color:#4a4e5a;-webkit-text-stroke:0.25px #4a4e5a;">10</div>
<div class="t" style="left:2078.04px;top:1320.24px;font-size:22.40px;color:#4a4e5a;-webkit-text-stroke:0.25px #4a4e5a;">0</div>
<div class="t" style="left:2184.25px;top:1342.54px;font-size:22.40px;color:#4a4e5a;letter-spacing:-0.347px;-webkit-text-stroke:0.25px #4a4e5a;">Cargada</div>
<div class="t" style="left:2412.95px;top:1342.54px;font-size:22.40px;color:#4a4e5a;letter-spacing:0.169px;-webkit-text-stroke:0.25px #4a4e5a;">Aprobada</div>
<div class="t" style="left:2309.75px;top:1385.04px;font-size:22.40px;color:#4a4e5a;letter-spacing:-0.207px;-webkit-text-stroke:0.25px #4a4e5a;">Estado</div>
<div class="b" style="left:0.00px;top:1400.00px;width:2966.00px;height:40.00px;background:linear-gradient(rgba(0,0,0,0),rgba(0,0,0,.03) 60%,rgba(0,0,0,.085));-webkit-mask-image:linear-gradient(90deg,rgba(0,0,0,.35),rgba(0,0,0,.45) 15%,#000 30%);"></div>
</div>
</body></html>
